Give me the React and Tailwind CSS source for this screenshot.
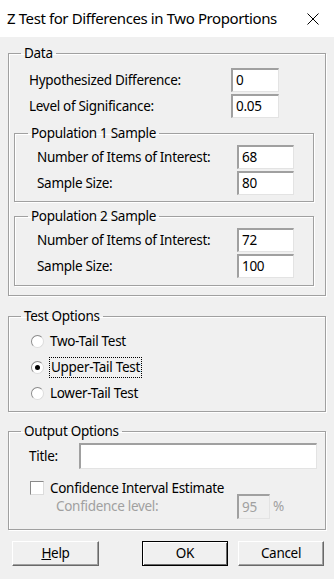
import React from "react";

const font = { fontFamily: '"Noto Sans", "Open Sans", sans-serif' };

function Field({ value, className, disabled }) {
  return (
    <div
      className={
        "flex items-center pl-[3px] border-t-2 border-l-2 border-t-[#a0a0a0] border-l-[#a0a0a0] border-b border-r border-b-[#e3e3e3] border-r-[#e3e3e3] " +
        (disabled ? "bg-[#f0f0f0] text-[#a0a0a0] " : "bg-white text-black ") +
        className
      }
    >
      {value}
    </div>
  );
}

function Group({ title, className, legendClass, children }) {
  return (
    <fieldset className={"border border-[#a0a0a0] shadow-[inset_1px_1px_0_#fff,1px_1px_0_#fff] " + className}>
      <legend className={"px-[3px] leading-[18px] " + legendClass}>{title}</legend>
      {children}
    </fieldset>
  );
}

function Radio({ checked }) {
  return (
    <span className="flex h-[13px] w-[13px] items-center justify-center rounded-full border border-t-[#8a8a8a] border-l-[#8a8a8a] border-r-[#dcdcdc] border-b-[#dcdcdc] bg-white">
      {checked && <span className="h-[5px] w-[5px] rounded-full bg-black" />}
    </span>
  );
}

export default function App() {
  return (
    <div className="w-[334px] h-[579px] bg-[#f0f0f0] text-[13.5px] tracking-[-0.3px] text-black overflow-hidden" style={font}>
      <div className="h-[37px] bg-white flex items-center justify-between pl-[7px] pr-[15px]">
        <span className="text-[15px] tracking-[-0.4px] leading-none whitespace-nowrap">Z Test for Differences in Two Proportions</span>
        <svg width="12" height="12" viewBox="0 0 12 12">
          <path d="M0.5 0.5 L11.5 11.5 M11.5 0.5 L0.5 11.5" stroke="#000" strokeWidth="1" />
        </svg>
      </div>

      <div className="px-[8px]">
        <Group title="Data" className="mt-[7px]" legendClass="ml-[12px]">
          <div className="pt-[6px] pb-[9px]">
            <div className="flex items-center h-[24px] pl-[20px]">
              <span className="w-[202px]">Hypothesized Difference:</span>
              <Field value="0" className="w-[48px] h-[24px]" />
            </div>
            <div className="flex items-center h-[24px] mt-[2px] pl-[20px]">
              <span className="w-[202px]">Level of Significance:</span>
              <Field value="0.05" className="w-[48px] h-[24px]" />
            </div>

            <Group title="Population 1 Sample" className="mt-[6px] ml-[5px] mr-[11px]" legendClass="ml-[13px]">
              <div className="pt-[3px] pb-[6px] pl-[22px]">
                <div className="flex items-center h-[24px]">
                  <span className="w-[200px]">Number of Items of Interest:</span>
                  <Field value="68" className="w-[57px] h-[24px]" />
                </div>
                <div className="flex items-center h-[24px] mt-[2px]">
                  <span className="w-[200px]">Sample Size:</span>
                  <Field value="80" className="w-[57px] h-[24px]" />
                </div>
              </div>
            </Group>

            <Group title="Population 2 Sample" className="mt-[5px] ml-[5px] mr-[11px]" legendClass="ml-[13px]">
              <div className="pt-[3px] pb-[7px] pl-[22px]">
                <div className="flex items-center h-[24px]">
                  <span className="w-[200px]">Number of Items of Interest:</span>
                  <Field value="72" className="w-[57px] h-[24px]" />
                </div>
                <div className="flex items-center h-[24px] mt-[2px]">
                  <span className="w-[200px]">Sample Size:</span>
                  <Field value="100" className="w-[57px] h-[24px]" />
                </div>
              </div>
            </Group>
          </div>
        </Group>

        <Group title="Test Options" className="mt-[11px]" legendClass="ml-[12px]">
          <div className="pt-[3px] pb-[5px] pl-[22px]">
            <div className="flex items-center h-[26px] gap-[5px]">
              <Radio />
              <span className="px-[1px]">Two-Tail Test</span>
            </div>
            <div className="flex items-center h-[26px] gap-[5px]">
              <Radio checked />
              <span className="px-[1px] leading-[19px] border border-dotted border-black">Upper-Tail Test</span>
            </div>
            <div className="flex items-center h-[26px] gap-[5px]">
              <Radio />
              <span className="px-[1px]">Lower-Tail Test</span>
            </div>
          </div>
        </Group>

        <Group title="Output Options" className="mt-[10px]" legendClass="ml-[12px]">
          <div className="pt-[3px] pb-[10px]">
            <div className="flex items-center h-[26px] pl-[20px]">
              <span className="w-[50px]">Title:</span>
              <Field value="" className="w-[238px] h-[26px]" />
            </div>
            <div className="flex items-center h-[24px] mt-[7px] pl-[21px] gap-[6px]">
              <span className="h-[14px] w-[14px] bg-white border border-t-[#8a8a8a] border-l-[#8a8a8a] border-r-[#dcdcdc] border-b-[#dcdcdc]" />
              <span>Confidence Interval Estimate</span>
            </div>
            <div className="flex items-center h-[25px] mt-[-6px] pl-[47px] text-[#a0a0a0]">
              <span className="w-[181px]">Confidence level:</span>
              <Field value="95" className="w-[33px] h-[25px]" disabled />
              <span className="ml-[3px]">%</span>
            </div>
          </div>
        </Group>
      </div>

      <div className="flex mt-[11px] pl-[12px]">
        <button className="w-[87px] h-[25px] border border-t-white border-l-white border-r-[#696969] border-b-[#696969] shadow-[inset_-1px_-1px_0_#a0a0a0] bg-[#f0f0f0]">
          <span className="underline">H</span>elp
        </button>
        <button className="ml-[43px] w-[86px] h-[25px] border border-black shadow-[inset_1px_1px_0_#fff,inset_-1px_-1px_0_#696969] bg-[#f0f0f0]">
          OK
        </button>
        <button className="ml-[10px] w-[86px] h-[25px] border border-t-white border-l-white border-r-[#696969] border-b-[#696969] shadow-[inset_-1px_-1px_0_#a0a0a0] bg-[#f0f0f0]">
          Cancel
        </button>
      </div>
    </div>
  );
}
